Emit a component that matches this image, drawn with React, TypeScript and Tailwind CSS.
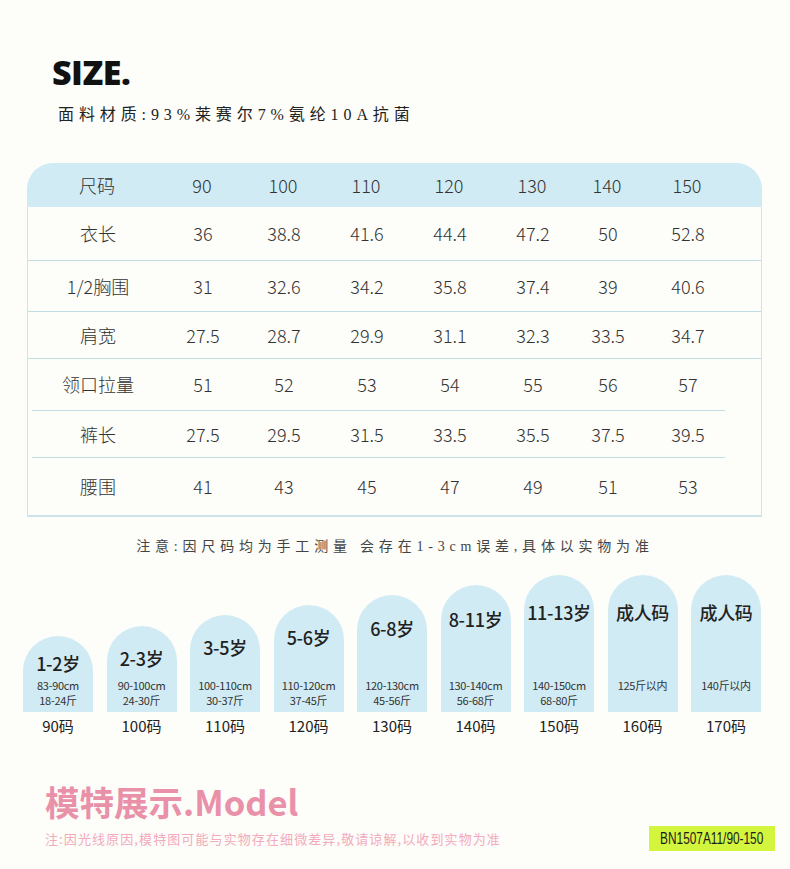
const cjk = "font-['Noto_Sans_CJK_SC',sans-serif]";

const sizes = ["90", "100", "110", "120", "130", "140", "150"];

const rows = [
  { label: "衣长", h: "h-[54px]", values: ["36", "38.8", "41.6", "44.4", "47.2", "50", "52.8"], line: "full" },
  { label: "1/2胸围", h: "h-[51px]", values: ["31", "32.6", "34.2", "35.8", "37.4", "39", "40.6"], line: "full" },
  { label: "肩宽", h: "h-[47px]", values: ["27.5", "28.7", "29.9", "31.1", "32.3", "33.5", "34.7"], line: "full" },
  { label: "领口拉量", h: "h-[52px]", values: ["51", "52", "53", "54", "55", "56", "57"], line: "short" },
  { label: "裤长", h: "h-[47px]", values: ["27.5", "29.5", "31.5", "33.5", "35.5", "37.5", "39.5"], line: "short" },
  { label: "腰围", h: "h-[57px]", values: ["41", "43", "45", "47", "49", "51", "53"], line: "none" },
];

const arches = [
  { age: "1-2岁", h: "h-[76px]", pt: "pt-[16px]", cm: "83-90cm", kg: "18-24斤", code: "90码" },
  { age: "2-3岁", h: "h-[86px]", pt: "pt-[21px]", cm: "90-100cm", kg: "24-30斤", code: "100码" },
  { age: "3-5岁", h: "h-[97px]", pt: "pt-[21px]", cm: "100-110cm", kg: "30-37斤", code: "110码" },
  { age: "5-6岁", h: "h-[107px]", pt: "pt-[21px]", cm: "110-120cm", kg: "37-45斤", code: "120码" },
  { age: "6-8岁", h: "h-[117px]", pt: "pt-[22px]", cm: "120-130cm", kg: "45-56斤", code: "130码" },
  { age: "8-11岁", h: "h-[127px]", pt: "pt-[23px]", cm: "130-140cm", kg: "56-68斤", code: "140码" },
  { age: "11-13岁", h: "h-[137px]", pt: "pt-[26px]", cm: "140-150cm", kg: "68-80斤", code: "150码" },
  { age: "成人码", h: "h-[137px]", pt: "pt-[26px]", cm: "125斤以内", kg: "", code: "160码" },
  { age: "成人码", h: "h-[137px]", pt: "pt-[26px]", cm: "140斤以内", kg: "", code: "170码" },
];

const gridCols = "grid grid-cols-[140px_70px_92px_74px_92px_74px_76px_84px_32px]";

function TableRow({ label, values }: { label: string; values: string[] }) {
  return (
    <div className={`${gridCols} h-full items-center text-[18px] text-[#333] font-light`}>
      <div className="text-center">{label}</div>
      {values.map((v, i) => (
        <div key={i} className="text-center">
          {v}
        </div>
      ))}
      <div />
    </div>
  );
}

function SizeTable() {
  return (
    <div className={`ml-[27px] w-[735px] ${cjk}`}>
      {/* header */}
      <div className="h-[44px] rounded-t-[26px] bg-[#d1ebf4]">
        <TableRow label="尺码" values={sizes} />
      </div>
      <div className="border-x border-b-2 border-[#cfe3ea]">
        {rows.map((r) => (
          <div key={r.label} className={`${r.h} flex flex-col`}>
            <div className="flex-1">
              <TableRow label={r.label} values={r.values} />
            </div>
            {r.line === "full" && <div className="h-px bg-[#c3dde5]" />}
            {r.line === "short" && <div className="h-px bg-[#c3dde5] ml-[4px] w-[693px]" />}
          </div>
        ))}
      </div>
    </div>
  );
}

function Arches() {
  return (
    <div className={`ml-[23px] flex items-start gap-[13.5px] ${cjk}`}>
      {arches.map((a, i) => (
        <div key={i} className="w-[70px] flex flex-col items-center">
          <div className="h-[137px] w-full flex items-end">
            <div className={`${a.h} ${a.pt} w-full rounded-t-full bg-[#d1ebf4] flex flex-col items-center justify-between`}>
              <div className="text-[18px] leading-[22px] font-medium text-[#222] whitespace-nowrap tracking-[-0.3px]">
                {a.age}
              </div>
              <div className="h-[34px] flex flex-col items-center text-[11px] leading-[15px] text-[#333] whitespace-nowrap tracking-[-0.3px]">
                <div>{a.cm}</div>
                <div>{a.kg}</div>
              </div>
            </div>
          </div>
          <div className="mt-[4px] text-[15px] leading-[20px] text-[#222]">{a.code}</div>
        </div>
      ))}
    </div>
  );
}

export default function App() {
  return (
    <div className="w-[790px] h-[869px] bg-[#fdfdf9] overflow-hidden">
      <div className="pl-[52px] pt-[53px] text-[34px] leading-[38px] font-black text-[#111] tracking-[-0.5px] font-['Open_Sans',sans-serif]">
        SIZE.
      </div>
      <div className="pl-[58px] mt-[14px] text-[16px] leading-[20px] tracking-[4.9px] text-[#222] font-['Liberation_Serif','Noto_Sans_CJK_SC',serif]">
        面料材质:93%莱赛尔7%氨纶10A抗菌
      </div>

      <div className="mt-[38px]">
        <SizeTable />
      </div>

      <div className="mt-[20px] text-center text-[14px] leading-[20px] tracking-[4.8px] text-[#444] font-['Liberation_Serif','Noto_Sans_CJK_SC',serif]">
        注意:因尺码均为手工测量 会存在1-3cm误差,具体以实物为准
      </div>

      <div className="mt-[18px]">
        <Arches />
      </div>

      <div className={`pl-[45px] mt-[46px] text-[34.5px] leading-[38px] font-bold text-[#e991a9] ${cjk}`}>
        模特展示.Model
      </div>

      <div className="mt-[6px] flex items-center justify-between pl-[45px] pr-[15px]">
        <div className={`text-[13px] leading-[18px] tracking-[1.1px] text-[#f2abbd] ${cjk}`}>
          注:因光线原因,模特图可能与实物存在细微差异,敬请谅解,以收到实物为准
        </div>
        <div className="w-[126px] h-[25px] bg-[#d3f53e] flex items-center justify-center">
          <span className="text-[16px] font-medium text-[#1a1a1a] whitespace-nowrap scale-x-[0.74] font-['Liberation_Sans',sans-serif]">
            BN1507A11/90-150
          </span>
        </div>
      </div>
    </div>
  );
}
